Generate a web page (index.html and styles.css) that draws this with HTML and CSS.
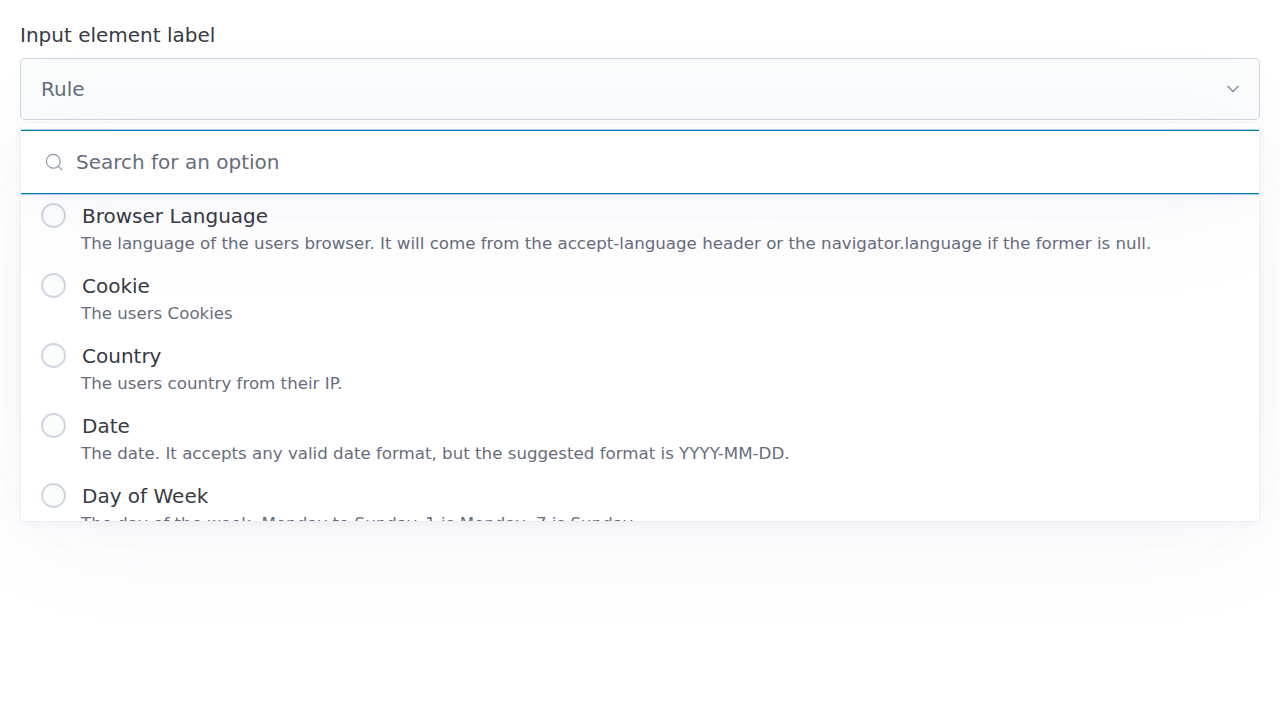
FILE: index.html
```
<!DOCTYPE html>
<html lang="en">
<head>
<meta charset="utf-8">
<meta name="viewport" content="width=device-width, initial-scale=1">
<title>Select a rule</title>
<link rel="stylesheet" href="styles.css">
</head>
<body>
<main class="field">
  <label class="field-label" for="rule">Input element label</label>
  <div class="select">
    <button class="trigger" id="rule" type="button" aria-expanded="true" aria-controls="panel">
      <span>Rule</span>
      <svg class="chevron" viewBox="0 0 14 8" aria-hidden="true"><path d="M1.5 1 7 6.5 12.5 1"/></svg>
    </button>
    <div class="panel" id="panel">
      <div class="search">
        <svg class="search-icon" viewBox="0 0 20 20" aria-hidden="true"><circle cx="9.3" cy="9.2" r="6.9"/><path d="m14.2 14.1 4 4"/></svg>
        <input class="search-input" type="text" placeholder="Search for an option" aria-label="Search for an option">
      </div>
      <div class="options">
        <label class="option"><input class="radio" type="radio" name="rule"><span class="text"><span class="name">Browser Language</span><span class="description">The language of the users browser. It will come from the accept-language header or the navigator.language if the former is null.</span></span></label>
        <label class="option"><input class="radio" type="radio" name="rule"><span class="text"><span class="name">Cookie</span><span class="description">The users Cookies</span></span></label>
        <label class="option"><input class="radio" type="radio" name="rule"><span class="text"><span class="name">Country</span><span class="description">The users country from their IP.</span></span></label>
        <label class="option"><input class="radio" type="radio" name="rule"><span class="text"><span class="name">Date</span><span class="description">The date. It accepts any valid date format, but the suggested format is YYYY-MM-DD.</span></span></label>
        <label class="option"><input class="radio" type="radio" name="rule"><span class="text"><span class="name">Day of Week</span><span class="description">The day of the week. Monday to Sunday. 1 is Monday, 7 is Sunday.</span></span></label>
      </div>
    </div>
  </div>
</main>
</body>
</html>
```
FILE: styles.css
```
* {
  box-sizing: border-box;
}

body {
  --shadow:
    0 2px 7px rgba(57, 57, 130, 0.04),
    0 10px 40px rgba(57, 57, 130, 0.02),
    0 12px 130px rgba(57, 57, 130, 0.05);
  margin: 0;
  background: #fff;
  color: #373b44;
  font: 20px/30px "DejaVu Sans", sans-serif;
}

.field {
  min-height: 100vh;
  padding: 20px;
}

.field-label {
  display: block;
  margin-bottom: 8px;
}

.trigger {
  display: flex;
  align-items: center;
  justify-content: space-between;
  width: 100%;
  height: 62px;
  padding: 0 19px 0 20px;
  border: 1px solid #cfd5e3;
  border-radius: 5px;
  background: #fbfdfd;
  color: #676d7c;
  font: inherit;
}

.chevron {
  width: 14px;
  height: 8px;
  fill: none;
  stroke: #878ea8;
  stroke-width: 1.5;
}

.panel {
  position: relative;
  height: 398px;
  margin: 3px 1px 0;
  padding-top: 7px;
  overflow: hidden;
  border-radius: 4px;
  background: #fff;
  box-shadow: 0 0 0 1px rgba(57, 57, 130, 0.03), var(--shadow);
}

.search {
  position: relative;
  z-index: 1;
  display: flex;
  align-items: center;
  gap: 12px;
  height: 64px;
  padding: 0 23px;
  border: solid #0077b3;
  border-width: 1px 0;
  background: #fff;
  box-shadow: 0 0 0 1px rgba(0, 119, 179, 0.3), var(--shadow);
}

.search-icon {
  width: 20px;
  height: 20px;
  fill: none;
  stroke: #8791a8;
  stroke-width: 1.2;
}

.search-input {
  flex: 1;
  min-width: 0;
  padding: 0;
  border: 0;
  outline: 0;
  background: none;
  color: #676d7c;
  font: inherit;
}

.search-input::placeholder {
  color: #676d7c;
  opacity: 1;
}

.options {
  padding: 7px 20px;
}

.option {
  display: flex;
  gap: 15px;
  height: 70px;
}

.radio {
  appearance: none;
  flex: none;
  width: 25px;
  height: 25px;
  margin: 2px 0 0;
  border: 2px solid #d0d5e3;
  border-radius: 50%;
  background: #fbfdfd;
}

.name,
.description {
  display: block;
}

.name {
  padding-left: 1px;
}

.description {
  color: #676d7c;
  font-size: smaller;
  line-height: 25px;
}
```
